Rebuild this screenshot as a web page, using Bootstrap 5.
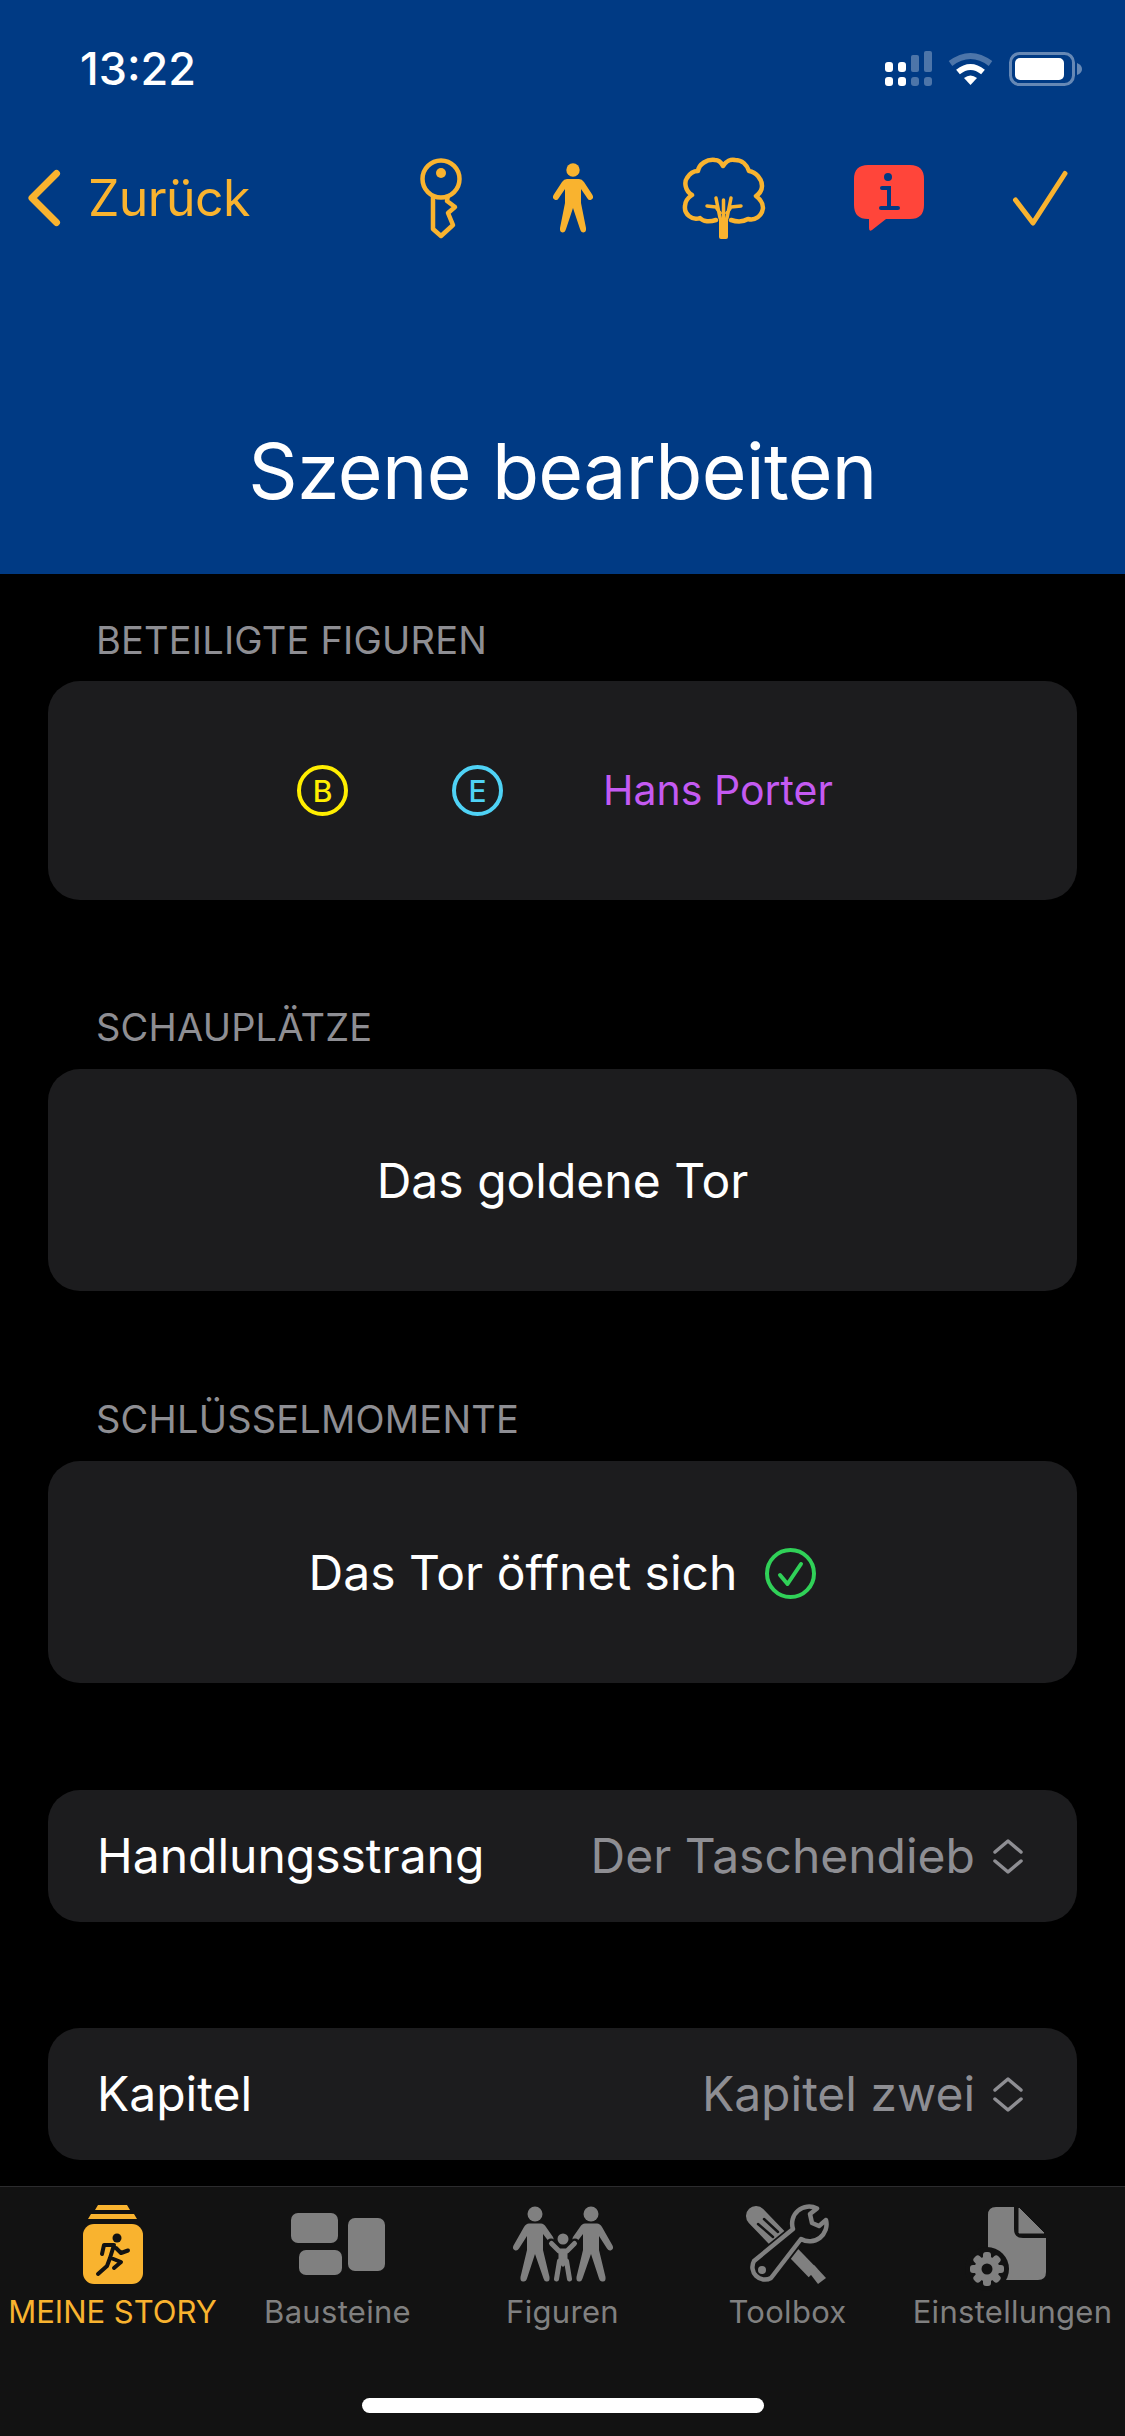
<!DOCTYPE html>
<html lang="de">
<head>
  <meta charset="UTF-8" />
  <meta name="viewport" content="width=device-width, initial-scale=1" />
  <title>Szene bearbeiten</title>
  <link href="https://cdn.jsdelivr.net/npm/bootstrap@5.3.2/dist/css/bootstrap.min.css" rel="stylesheet">
  <script src="https://cdn.jsdelivr.net/npm/bootstrap@5.3.2/dist/js/bootstrap.bundle.min.js"></script>
  <style>
    html, body { background: #000; }
    body { font-family: Inter, "Liberation Sans", sans-serif; height: 2436px; overflow: hidden; }
    svg { display: block; flex: none; overflow: visible; }

    .sz-head { background: #003a84; height: 574px; color: #fff; }
    .sz-status { height: 35px; padding: 0 43px 0 80px; margin-top: 51px; }
    .sz-time { font-size: 45px; font-weight: 500; line-height: 35px; }
    .sz-status-icons { gap: 16px; }
    .sz-nav { height: 82px; margin-top: 71px; padding: 0 58px 0 28px; }
    .sz-back { color: #f9b32f; font-size: 50px; line-height: 1; gap: 28px; letter-spacing: -.6px; }
    .sz-tools { gap: 89.5px; }
    .sz-title { font-size: 77px; font-weight: 400; line-height: 100px; margin: 182px 0 0; color: #fff; letter-spacing: -.7px; }

    .sz-main { padding: 0 48px; }
    .sz-label { color: #8e8e93; font-size: 38px; line-height: 40px; padding-left: 48px; margin-top: 107px; margin-bottom: 22px; letter-spacing: .2px; }
    .sz-label-first { margin-top: 46px; margin-bottom: 21px; }
    .sz-label-third { margin-top: 108px; }
    .sz-panel { background: #1c1c1e; border-radius: 32px; color: #fff; font-size: 48px; }
    .sz-panel-tall { height: 222px; padding-top: 2px; }
    .sz-panel-first { height: 219px; gap: 100px; padding-left: 5px; }
    .sz-panel-row { height: 132px; margin-top: 107px; padding: 0 54px 0 49px; }
    .sz-panel-last { margin-top: 106px; }
    .sz-value { color: #8e8e93; gap: 18px; }
    .sz-letter { width: 51px; height: 51px; border-radius: 50%; border: 4px solid; font-size: 30px; font-weight: 500; line-height: 1; }
    .sz-yellow { color: #ffee00; margin-right: 4px; }
    .sz-cyan { color: #4fd2f5; }
    .sz-purple { color: #c45af2; font-size: 41px; }
    .sz-keygap { gap: 28px; }

    .sz-tabbar { position: absolute; left: 0; right: 0; bottom: 0; top: 2186px; background: #121212; border-top: 1px solid #2c2c2e; }
    .sz-tab { width: 225px; padding-top: 17px; color: #808080; font-size: 31px; line-height: 40px; letter-spacing: .3px; }
    .sz-tab.sz-on { color: #f9b32f; letter-spacing: 0; }
    .sz-tabicon { height: 80px; margin-bottom: 8px; }
    .sz-homebar { position: absolute; left: 362px; top: 211px; width: 402px; height: 15px; background: #fff; border-radius: 8px; }
  </style>
</head>
<body class="position-relative">

<header class="sz-head d-flex flex-column overflow-hidden">
  <div class="sz-status d-flex justify-content-between align-items-center">
    <span class="sz-time">13:22</span>
    <div class="sz-status-icons d-flex align-items-center">
      <svg width="47" height="35" viewBox="0 0 47 35">
        <g fill="#fff">
          <rect x="0" y="11" width="8" height="10" rx="3"/><rect x="13" y="11" width="8" height="10" rx="3"/>
          <rect x="0" y="26" width="8" height="9" rx="3"/><rect x="13" y="26" width="8" height="9" rx="3"/>
        </g>
        <g fill="#fff" fill-opacity=".3">
          <rect x="26" y="4" width="8" height="17" rx="2"/><rect x="39" y="0" width="8" height="21" rx="2"/>
          <rect x="26" y="26" width="8" height="9" rx="3"/><rect x="39" y="26" width="8" height="9" rx="3"/>
        </g>
      </svg>
      <svg width="45" height="33" viewBox="0 0 45 33" fill="none">
        <path d="M2.5 11.5 Q22.5 -3.5 42.5 11.5" stroke="#fff" stroke-opacity=".3" stroke-width="6"/>
        <path d="M10 20 Q22.5 10 35 20" stroke="#fff" stroke-width="6"/>
        <path d="M16 26 Q22.5 21 29 26 L22.5 33 Z" fill="#fff"/>
      </svg>
      <svg width="73" height="34" viewBox="0 0 73 34">
        <rect x="1.5" y="1.5" width="63" height="31" rx="9" fill="none" stroke="#fff" stroke-opacity=".4" stroke-width="3"/>
        <rect x="6" y="6" width="49" height="22" rx="5" fill="#fff"/>
        <path d="M68 11 Q73 13 73 17 Q73 21 68 23 Z" fill="#fff" fill-opacity=".4"/>
      </svg>
    </div>
  </div>

  <div class="sz-nav d-flex justify-content-between align-items-center">
    <a class="sz-back d-flex align-items-center text-decoration-none" href="#">
      <svg width="32" height="56" viewBox="0 0 32 56" fill="none"><path d="M28.500 3.500 L4 28 L28.500 52.500" stroke="#f9b32f" stroke-width="7" stroke-linecap="round" stroke-linejoin="round"/></svg>
      <span>Zurück</span>
    </a>
    <div class="sz-tools d-flex align-items-center">
      <svg width="42" height="80" viewBox="0 0 42 80" fill="none" stroke="#f9b32f" stroke-width="4.5" stroke-linejoin="round">
        <circle cx="21" cy="21" r="18.5"/>
        <circle cx="21" cy="15" r="5" fill="#f9b32f" stroke="none"/>
        <path d="M13 38 V71 L21 78 L33 67 L28 55 L35 49 L27 43 L28 37"/>
      </svg>
      <svg width="42" height="70" viewBox="0 0 42 70" fill="#f9b32f">
        <circle cx="21" cy="7" r="6.700"/>
        <path d="M15 16 H27 Q30 16 32 19 L40.500 32 Q42 35 39.500 36.500 Q37 38 35.500 35.500 L29 26 V40 L34 65 Q34.500 69 31.500 69.500 Q29 69.500 28 66 L21 45 L14 66 Q13 69.500 10.500 69.500 Q7.500 69 8 65 L13 40 V26 L6.500 35.500 Q5 38 2.500 36.500 Q0 35 1.500 32 L10 19 Q12 16 15 16 Z"/>
      </svg>
      <svg width="81" height="81" viewBox="0 0 81 81" fill="none" stroke="#f9b32f" stroke-width="4.5" stroke-linecap="round" stroke-linejoin="round">
        <path d="M33 62 C27 64 20 64 17 60 C9 63 1 56 2 48 C2 43 6 39 9 37 C2 33 1 24 4 20 C7 15 11 13 15 13 C16 6 24 1 32 2 C35 2 38 4 40 8 C43 3 48 1 52 2 C59 2 64 7 66 13 C73 14 79 21 79 28 C79 32 76 36 73 38 C77 41 80 45 80 50 C79 58 72 63 65 61 C60 64 54 64 48 62"/>
        <path d="M36 60 H45 V79 Q45 81 43 81 H38 Q36 81 36 79 Z" fill="#f9b32f" stroke="none"/>
        <path d="M37 60 L33 40 M44 60 L48 40 M37 55 L33 49 L24 48 M44 55 L48 49 L58 48 M40.500 60 V42" stroke-width="3.500"/>
      </svg>
      <svg width="70" height="66" viewBox="0 0 70 66">
        <path d="M14 0 H56 Q70 0 70 14 V40 Q70 54 56 54 H32 L18 65 Q15 67 15 63 V54 H14 Q0 54 0 40 V14 Q0 0 14 0 Z" fill="#ff453a"/>
        <circle cx="34" cy="12" r="4" fill="#003a84"/>
        <path d="M28 23 H35 V43 M27 43 H44" fill="none" stroke="#003a84" stroke-width="4" stroke-linecap="round"/>
      </svg>
      <svg width="54" height="54" viewBox="0 0 54 54" fill="none"><path d="M2.500 29 L20 52 L52 2.500" stroke="#f9b32f" stroke-width="5" stroke-linecap="round" stroke-linejoin="round"/></svg>
    </div>
  </div>

  <h1 class="sz-title text-center">Szene bearbeiten</h1>
</header>

<main class="sz-main">
  <div class="sz-label sz-label-first">BETEILIGTE FIGUREN</div>
  <div class="sz-panel sz-panel-first d-flex align-items-center justify-content-center">
    <span class="sz-letter sz-yellow d-flex align-items-center justify-content-center">B</span>
    <span class="sz-letter sz-cyan d-flex align-items-center justify-content-center">E</span>
    <span class="sz-purple">Hans Porter</span>
  </div>

  <div class="sz-label">SCHAUPLÄTZE</div>
  <div class="sz-panel sz-panel-tall d-flex align-items-center justify-content-center">Das goldene Tor</div>

  <div class="sz-label sz-label-third">SCHLÜSSELMOMENTE</div>
  <div class="sz-panel sz-panel-tall sz-keygap d-flex align-items-center justify-content-center">
    <span>Das Tor öffnet sich</span>
    <svg width="51" height="51" viewBox="0 0 51 51" fill="none" stroke="#30d158" stroke-width="4" stroke-linecap="round" stroke-linejoin="round">
      <circle cx="25.500" cy="25.500" r="23.500"/>
      <path d="M15 27 L22.500 36 L36 16"/>
    </svg>
  </div>

  <div class="sz-panel sz-panel-row d-flex align-items-center justify-content-between">
    <span>Handlungsstrang</span>
    <span class="sz-value d-flex align-items-center">Der Taschendieb
      <svg width="30" height="35" viewBox="0 0 30 35" fill="none" stroke="#8e8e93" stroke-width="3.500" stroke-linecap="round" stroke-linejoin="round"><path d="M2 13 L15 2 L28 13 M2 22 L15 33 L28 22"/></svg>
    </span>
  </div>

  <div class="sz-panel sz-panel-row sz-panel-last d-flex align-items-center justify-content-between">
    <span>Kapitel</span>
    <span class="sz-value d-flex align-items-center">Kapitel zwei
      <svg width="30" height="35" viewBox="0 0 30 35" fill="none" stroke="#8e8e93" stroke-width="3.500" stroke-linecap="round" stroke-linejoin="round"><path d="M2 13 L15 2 L28 13 M2 22 L15 33 L28 22"/></svg>
    </span>
  </div>
</main>

<nav class="sz-tabbar d-flex">
  <div class="sz-tab sz-on d-flex flex-column align-items-center">
    <div class="sz-tabicon d-flex align-items-center">
      <svg width="60" height="79" viewBox="0 0 60 79">
        <path d="M15 0 H44 L47 5 H12 Z M8 9 H51 L54 14 H5 Z" fill="#f9b32f"/>
        <rect x="0" y="19" width="60" height="60" rx="11" fill="#f9b32f"/>
        <circle cx="34" cy="33" r="4.500" fill="#121212"/>
        <path d="M19 49 L21 40 H31 L27 53 L24 61 L15 69 M33 43 L38 48 L45 45.500 M28 53 L38 57 L31 63" fill="none" stroke="#121212" stroke-width="4" stroke-linecap="round" stroke-linejoin="round"/>
      </svg>
    </div>
    <span>MEINE STORY</span>
  </div>
  <div class="sz-tab d-flex flex-column align-items-center">
    <div class="sz-tabicon d-flex align-items-center">
      <svg width="94" height="62" viewBox="0 0 94 62" fill="#808080">
        <rect x="0" y="0" width="47" height="30" rx="7"/>
        <rect x="57" y="5" width="37" height="53" rx="7"/>
        <rect x="8" y="37" width="43" height="25" rx="7"/>
      </svg>
    </div>
    <span>Bausteine</span>
  </div>
  <div class="sz-tab d-flex flex-column align-items-center">
    <div class="sz-tabicon d-flex align-items-center">
      <svg width="102" height="77" viewBox="0 0 102 77" fill="#808080">
        <g>
          <circle cx="23" cy="8" r="7.500"/>
          <path d="M17 17.500 H29 Q32 17.500 34 21 L41 31 Q42.500 34 40 35.500 Q38 37 36 34.500 L31 28 V44 L37.500 71 Q38 75.500 35 75.500 Q32.500 76 31.500 72.500 L23 48 L15 72.500 Q14 76 11 75.500 Q8 75.500 8.500 71 L15 44 V30 L7 42.500 Q5 45.500 2.500 44 Q0 42.500 1.500 39.500 L12 21 Q14 17.500 17 17.500 Z"/>
        </g>
        <g transform="translate(102 0) scale(-1 1)">
          <circle cx="23" cy="8" r="7.500"/>
          <path d="M17 17.500 H29 Q32 17.500 34 21 L41 31 Q42.500 34 40 35.500 Q38 37 36 34.500 L31 28 V44 L37.500 71 Q38 75.500 35 75.500 Q32.500 76 31.500 72.500 L23 48 L15 72.500 Q14 76 11 75.500 Q8 75.500 8.500 71 L15 44 V30 L7 42.500 Q5 45.500 2.500 44 Q0 42.500 1.500 39.500 L12 21 Q14 17.500 17 17.500 Z"/>
        </g>
        <path d="M39 37 L47 45 H55 L63 37" fill="none" stroke="#121212" stroke-width="9" stroke-linecap="round" stroke-linejoin="round"/>
        <circle cx="51" cy="33" r="5.500"/>
        <path d="M39.500 37.500 L47 45 H55 L62.500 37.500 M47.500 55 L44.500 73 M54.500 55 L57.500 73" fill="none" stroke="#808080" stroke-width="5" stroke-linecap="round" stroke-linejoin="round"/>
        <path d="M46.500 44 H55.500 V57 L51 61 L46.500 57 Z"/>
      </svg>
    </div>
    <span>Figuren</span>
  </div>
  <div class="sz-tab d-flex flex-column align-items-center">
    <div class="sz-tabicon d-flex align-items-center">
      <svg width="81" height="79" viewBox="0 0 81 79" fill="none" stroke-linecap="round" stroke-linejoin="round">
        <path d="M9 11 L34 37" stroke="#808080" stroke-width="20"/>
        <path d="M17 14 L31 27 M11 19 L26 32" stroke="#121212" stroke-width="2.500"/>
        <path d="M36 37 L66 68" stroke="#808080" stroke-width="12" stroke-linecap="butt"/>
        <path d="M61 66 L67 60 L79 73 L71 79 Z" fill="#808080"/>
        <path id="wrenchHalo" d="M70 3.500 A17 17 0 0 0 46 24 L7 56 A12.500 12.500 0 0 0 24 73 L54 34 A17 17 0 0 0 79 15 L72 21 L65 18 L63 9 Z" stroke="#121212" stroke-width="8"/>
        <path d="M70 3.500 A17 17 0 0 0 46 24 L7 56 A12.500 12.500 0 0 0 24 73 L54 34 A17 17 0 0 0 79 15 L72 21 L65 18 L63 9 Z" fill="#121212" stroke="#808080" stroke-width="4.500"/>
        <circle cx="15" cy="65" r="4" fill="#808080"/>
      </svg>
    </div>
    <span>Toolbox</span>
  </div>
  <div class="sz-tab d-flex flex-column align-items-center">
    <div class="sz-tabicon d-flex align-items-center">
      <svg width="86" height="86" viewBox="0 -6 86 86">
        <path d="M26 0 H44 V22 Q44 31 53 31 H76 V65 Q76 73 68 73 H18 V8 Q18 0 26 0 Z" fill="#808080"/>
        <path d="M49 1 L74 26 H49 Z" fill="#808080" stroke="#808080" stroke-width="1" stroke-linejoin="round"/>
        <circle cx="17" cy="62" r="22" fill="#121212"/>
        <g fill="#808080">
          <circle cx="17" cy="62" r="12.500"/>
          <rect x="13" y="45" width="8" height="34" rx="3"/>
          <rect x="13" y="45" width="8" height="34" rx="3" transform="rotate(45 17 62)"/>
          <rect x="13" y="45" width="8" height="34" rx="3" transform="rotate(90 17 62)"/>
          <rect x="13" y="45" width="8" height="34" rx="3" transform="rotate(135 17 62)"/>
        </g>
        <circle cx="17" cy="62" r="5.500" fill="#121212"/>
      </svg>
    </div>
    <span>Einstellungen</span>
  </div>
  <div class="sz-homebar"></div>
</nav>

</body>
</html>
